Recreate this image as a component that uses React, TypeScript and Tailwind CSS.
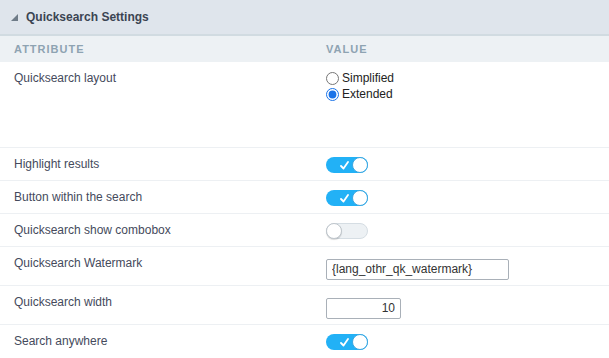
import React from "react";

type Row = {
	label: string;
	kind: "radio" | "toggle" | "text" | "number";
	on?: boolean;
	value?: string;
	h: string;
};

const rows: Row[] = [
	{ label: "Quicksearch layout", kind: "radio", h: "h-[86px]" },
	{ label: "Highlight results", kind: "toggle", on: true, h: "h-[33px]" },
	{ label: "Button within the search", kind: "toggle", on: true, h: "h-[33px]" },
	{ label: "Quicksearch show combobox", kind: "toggle", on: false, h: "h-[33px]" },
	{ label: "Quicksearch Watermark", kind: "text", value: "{lang_othr_qk_watermark}", h: "h-[39px]" },
	{ label: "Quicksearch width", kind: "number", value: "10", h: "h-[39px]" },
	{ label: "Search anywhere", kind: "toggle", on: true, h: "h-[33px]" },
];

function Toggle({ on }: { on?: boolean }) {
	if (on) {
		return (
			<div className="relative w-[42px] h-[16px] rounded-full bg-[#22b1f6]">
				<svg className="absolute left-[14px] top-[4px]" width="9" height="9" viewBox="0 0 9 9">
					<path d="M1 5 L3.5 7.5 L8 1" fill="none" stroke="white" strokeWidth="1.8" strokeLinecap="round" strokeLinejoin="round" />
				</svg>
				<div className="absolute right-0 top-0 w-[16px] h-[16px] rounded-full bg-white border border-[#3aa6e0]" />
			</div>
		);
	}
	return (
		<div className="relative w-[42px] h-[16px] rounded-full bg-[#edf1f4] border border-[#d5dde3]">
			<div className="absolute left-[-1px] top-[-1px] w-[16px] h-[16px] rounded-full bg-white border border-[#bfc6cc] shadow-[0_1px_1px_rgba(0,0,0,0.15)]" />
		</div>
	);
}

function Value({ row }: { row: Row }) {
	if (row.kind === "radio") {
		return (
			<div className="flex flex-col pt-[8px] text-[12px] text-[#222] leading-[16px]">
				<label className="flex items-center gap-[3px]">
					<input type="radio" name="layout" className="m-0 w-[13px] h-[13px] accent-[#1a73e8]" />
					Simplified
				</label>
				<label className="flex items-center gap-[3px]">
					<input type="radio" name="layout" defaultChecked className="m-0 w-[13px] h-[13px] accent-[#1a73e8]" />
					Extended
				</label>
			</div>
		);
	}
	if (row.kind === "toggle") {
		return (
			<div className="pt-[9px]">
				<Toggle on={row.on} />
			</div>
		);
	}
	return (
		<div className="pt-[9px]">
			<input
				readOnly
				value={row.value}
				className={`h-[21px] border border-[#a9b0b8] rounded-[2px] px-[5px] text-[12px] text-[#333] outline-none ${
					row.kind === "number" ? "w-[75px] text-right" : "w-[183px]"
				}`}
			/>
		</div>
	);
}

export default function App() {
	return (
		<div className="w-[609px] h-[358px] overflow-hidden bg-white font-['Liberation_Sans',Arial,sans-serif]">
			<div className="h-[34px] bg-[#dfe5ec] flex items-center pl-[11px] gap-[8px]">
				<svg width="7" height="7" viewBox="0 0 7 7">
					<path d="M7 0 L7 7 L0 7 Z" fill="#6f7c88" />
				</svg>
				<span className="text-[12px] font-bold text-[#3b4452]">Quicksearch Settings</span>
			</div>
			<div className="h-[2px] bg-[#d1dbe1]" />
			<div className="h-[26px] bg-[#edf1f4] flex items-center text-[11px] font-bold tracking-[1px] text-[#8ea3b2]">
				<div className="w-[326px] pl-[14px]">ATTRIBUTE</div>
				<div>VALUE</div>
			</div>
			{rows.map((row, i) => (
				<div
					key={row.label}
					className={`flex ${row.h} ${i < rows.length - 1 ? "border-b border-[#edf0f3]" : ""}`}
				>
					<div className="w-[326px] pl-[14px] pt-[9px] text-[12px] text-[#454a5c] leading-[14px]">
						{row.label}
					</div>
					<Value row={row} />
				</div>
			))}
		</div>
	);
}
